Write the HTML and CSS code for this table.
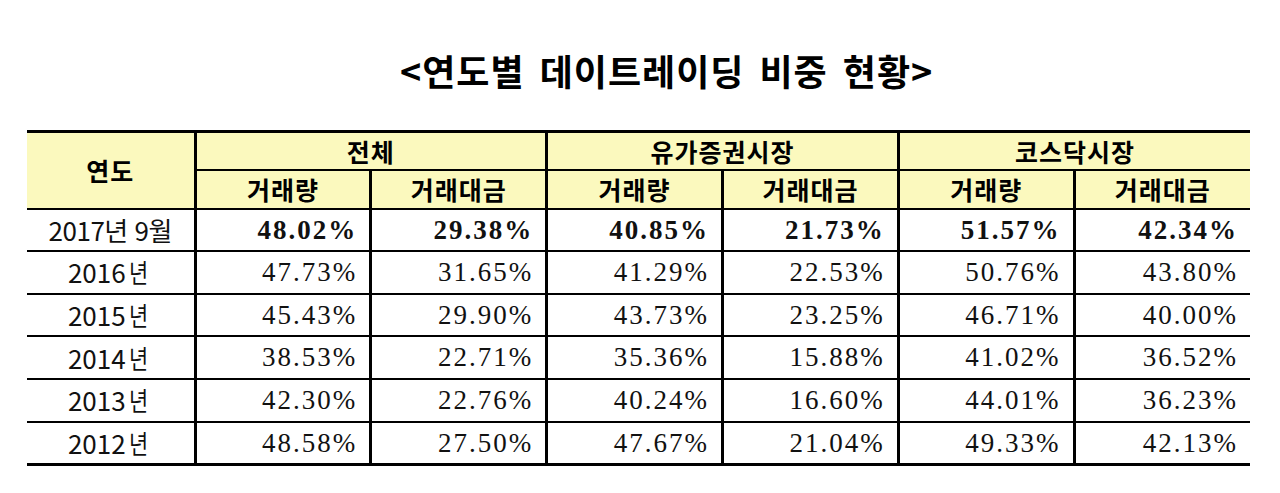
FILE: index.html
```html
<!DOCTYPE html>
<html lang="ko">
<head>
<meta charset="utf-8">
<link rel="stylesheet" href="styles.css">
</head>
<body>
<div class="page">
  <h1 class="title">&lt;연도별 데이트레이딩 비중 현황&gt;</h1>
  <table class="grid">
    <colgroup>
      <col class="c-year">
      <col class="c-num"><col class="c-num"><col class="c-num"><col class="c-num"><col class="c-num"><col class="c-num">
    </colgroup>
    <thead>
      <tr class="h1">
        <th rowspan="2" class="year-h">연도</th>
        <th colspan="2">전체</th>
        <th colspan="2">유가증권시장</th>
        <th colspan="2">코스닥시장</th>
      </tr>
      <tr class="h2">
        <th>거래량</th><th>거래대금</th>
        <th>거래량</th><th>거래대금</th>
        <th>거래량</th><th>거래대금</th>
      </tr>
    </thead>
    <tbody>
      <tr class="r first bold">
        <td class="y y-first">2017년 9월</td>
        <td>48.02%</td><td>29.38%</td><td>40.85%</td><td>21.73%</td><td>51.57%</td><td>42.34%</td>
      </tr>
      <tr class="r">
        <td class="y">2016<span class="yr">년</span></td>
        <td>47.73%</td><td>31.65%</td><td>41.29%</td><td>22.53%</td><td>50.76%</td><td>43.80%</td>
      </tr>
      <tr class="r">
        <td class="y">2015<span class="yr">년</span></td>
        <td>45.43%</td><td>29.90%</td><td>43.73%</td><td>23.25%</td><td>46.71%</td><td>40.00%</td>
      </tr>
      <tr class="r">
        <td class="y">2014<span class="yr">년</span></td>
        <td>38.53%</td><td>22.71%</td><td>35.36%</td><td>15.88%</td><td>41.02%</td><td>36.52%</td>
      </tr>
      <tr class="r">
        <td class="y">2013<span class="yr">년</span></td>
        <td>42.30%</td><td>22.76%</td><td>40.24%</td><td>16.60%</td><td>44.01%</td><td>36.23%</td>
      </tr>
      <tr class="r last">
        <td class="y">2012<span class="yr">년</span></td>
        <td>48.58%</td><td>27.50%</td><td>47.67%</td><td>21.04%</td><td>49.33%</td><td>42.13%</td>
      </tr>
    </tbody>
  </table>
</div>
</body>
</html>
```
FILE: styles.css
```css
html, body {
  margin: 0;
  padding: 0;
  background: #ffffff;
}
.page {
  padding: 44px 0 0 27px;
  font-family: "Noto Sans CJK KR", "Noto Sans", sans-serif;
  color: #000;
}
.title {
  margin: 0 0 0 373px;
  font-size: 36px;
  font-weight: 700;
  line-height: 52px;
  letter-spacing: 1px;
  word-spacing: 4px;
  height: 52px;
}
.grid {
  margin-top: 34px;
  width: 1223px;
  border-collapse: collapse;
  table-layout: fixed;
  border-top: 3px solid #000;
  border-bottom: 3px solid #000;
}
.c-year { width: 168px; }
.c-num { width: 175.8px; }
th {
  background: #fbf9be;
  font-weight: 700;
  font-size: 25px;
  letter-spacing: 1px;
  padding: 0;
  text-align: center;
  border-left: 3px solid #000;
  border-bottom: 2px solid #000;
  line-height: 1;
}
th.year-h { border-left: none; }
.h1 th { height: 36px; }
.h2 th { height: 37px; }
td {
  border-left: 3px solid #000;
  border-bottom: 2px solid #000;
  padding: 0 12px 0 0;
  text-align: right;
  font-family: "Liberation Serif", serif;
  font-size: 27px;
  letter-spacing: 2px;
  height: 40.7px;
  line-height: 1;
  color: #111;
}
.first td { height: 40px; }
td.y {
  border-left: none;
  text-align: center;
  padding: 0;
  font-family: "Noto Sans CJK KR", "Noto Sans", sans-serif;
  font-size: 26px;
  letter-spacing: 0;
}
td.y-first {
  font-size: 26px;
  letter-spacing: -0.5px;
}
.yr {
  display: inline-block;
  margin-left: 3px;
  transform: scaleX(0.8);
  transform-origin: left center;
}
.bold td { font-weight: 700; }
.bold td.y { font-weight: 400; }
.last td { border-bottom: none; }
```
